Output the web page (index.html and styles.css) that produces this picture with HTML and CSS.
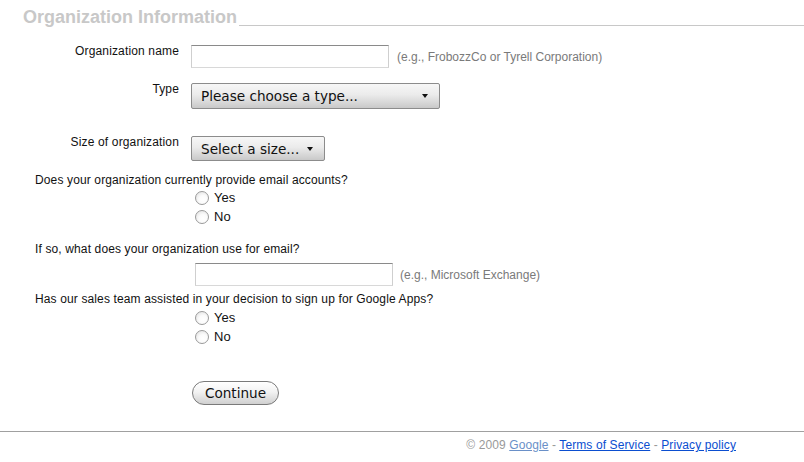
FILE: index.html
```html
<!DOCTYPE html>
<html>
<head>
<meta charset="utf-8">
<link rel="stylesheet" href="styles.css">
</head>
<body>
<div class="header">
  <h1 class="title">Organization Information</h1>
  <div class="rule"></div>
</div>
<form class="form">
  <div class="row r1">
    <label class="lbl">Organization name</label>
    <div class="field">
      <input class="text" type="text">
      <span class="hint">(e.g., FrobozzCo or Tyrell Corporation)</span>
    </div>
  </div>
  <div class="row r2">
    <label class="lbl">Type</label>
    <div class="field">
      <span class="sel sel-type"><select><option>Please choose a type...</option></select></span>
    </div>
  </div>
  <div class="row r3">
    <label class="lbl">Size of organization</label>
    <div class="field">
      <span class="sel sel-size"><select><option>Select a size...</option></select></span>
    </div>
  </div>
  <p class="question q1">Does your organization currently provide email accounts?</p>
  <div class="radios rad1">
    <label class="radio"><input type="radio" name="prov"><span>Yes</span></label>
    <label class="radio"><input type="radio" name="prov"><span>No</span></label>
  </div>
  <p class="question q2">If so, what does your organization use for email?</p>
  <div class="sub-field">
    <input class="text" type="text">
    <span class="hint">(e.g., Microsoft Exchange)</span>
  </div>
  <p class="question q3">Has our sales team assisted in your decision to sign up for Google Apps?</p>
  <div class="radios rad2">
    <label class="radio"><input type="radio" name="sales"><span>Yes</span></label>
    <label class="radio"><input type="radio" name="sales"><span>No</span></label>
  </div>
  <div class="actions">
    <button type="button" class="btn">Continue</button>
  </div>
</form>
<div class="footer">
  <span class="copy">© 2009 <a class="visited" href="#">Google</a> - <a href="#">Terms of Service</a> - <a href="#">Privacy policy</a></span>
</div>
</body>
</html>
```
FILE: styles.css
```css
html, body {
  margin: 0;
  padding: 0;
  background: #fff;
}
body {
  width: 804px;
  height: 462px;
  overflow: hidden;
  font-family: "Liberation Sans", Arial, sans-serif;
  font-size: 12px;
  color: #000;
}
.header {
  display: flex;
  height: 26px;
}
.title {
  margin: 0 2px 0 23px;
  padding-top: 7px;
  font-size: 18px;
  line-height: 20px;
  font-weight: bold;
  color: #c8c8c8;
  white-space: nowrap;
}
.rule {
  flex: 1;
  height: 25px;
  border-bottom: 1px solid #c8c8c8;
}
.form {
  margin: 0;
}
.row {
  display: flex;
  align-items: flex-start;
}
.r1 { margin-top: 19px; }
.r2 { margin-top: 15px; }
.r3 { margin-top: 27px; }
.lbl {
  width: 179px;
  text-align: right;
  line-height: 12px;
  padding-right: 12px;
  color: #111;
  letter-spacing: 0.15px;
}
.field {
  display: flex;
  align-items: center;
}
.text {
  box-sizing: border-box;
  width: 198px;
  height: 23px;
  margin: 0;
  border: 1px solid #cfcfcf;
  border-top-color: #8a8a8a;
  border-bottom-color: #d8d8d8;
  background: #fff;
  padding: 0 3px;
  font-family: "Liberation Sans", Arial, sans-serif;
  font-size: 12px;
}
.hint {
  margin-left: 8px;
  color: #7a7a7a;
  font-size: 12px;
  white-space: nowrap;
}
.sel {
  position: relative;
  display: block;
}
.sel select {
  display: block;
  -webkit-appearance: none;
  appearance: none;
  box-sizing: border-box;
  margin: 0;
  border: 1px solid #8c8c8c;
  border-radius: 2px;
  background: linear-gradient(#f7f7f7, #ebebeb 45%, #c9c9c9);
  font-family: "DejaVu Sans", sans-serif;
  font-size: 13.6px;
  color: #111;
  padding: 0 0 0 9px;
  outline: none;
}
.sel::after {
  content: "";
  position: absolute;
  top: 50%;
  right: 12px;
  margin-top: -2px;
  border-left: 3px solid transparent;
  border-right: 3px solid transparent;
  border-top: 4px solid #111;
  pointer-events: none;
}
.sel-type select {
  width: 249px;
  height: 26px;
}
.sel-size select {
  width: 134px;
  height: 25px;
}
.question {
  margin: 0 0 0 35px;
  line-height: 14px;
  color: #111;
  letter-spacing: 0.13px;
}
.q1 { margin-top: 12px; }
.q2 { margin-top: 16px; }
.q3 { margin-top: 6px; }
.radios {
  margin-left: 195px;
  display: flex;
  flex-direction: column;
}
.rad1 { margin-top: 1px; }
.rad2 { margin-top: 2px; }
.radio {
  display: flex;
  align-items: center;
  height: 19px;
  font-size: 13px;
  color: #111;
}
.radio input {
  -webkit-appearance: none;
  appearance: none;
  box-sizing: border-box;
  width: 14px;
  height: 14px;
  margin: 0 5px 0 0;
  border: 1px solid #9a9a9a;
  border-radius: 50%;
  background: radial-gradient(circle at 60% 65%, #fff 0, #fbfbfb 40%, #dcdcdc 100%);
}
.radio span {
  line-height: 14px;
}
.sub-field {
  display: flex;
  align-items: center;
  margin: 7px 0 0 195px;
}
.sub-field .hint {
  margin-left: 7px;
}
.actions {
  margin: 35px 0 0 192px;
}
.btn {
  box-sizing: border-box;
  width: 87px;
  height: 24px;
  margin: 0;
  padding: 0;
  border: 1px solid #7a7a7a;
  border-radius: 12px;
  background: linear-gradient(#ffffff, #f2f2f2 45%, #d0d0d0);
  box-shadow: inset 0 1px 0 #fff;
  font-family: "DejaVu Sans", sans-serif;
  font-size: 13.6px;
  color: #111;
}
.footer {
  margin-top: 26px;
  border-top: 1px solid #a0a0a0;
  padding: 6px 68px 0 0;
  text-align: right;
  line-height: 14px;
  color: #999;
  font-size: 12px;
  letter-spacing: 0.1px;
}
.footer a {
  color: #0b4ed0;
  text-decoration: underline;
}
.footer a.visited {
  color: #6a90c8;
}
```
